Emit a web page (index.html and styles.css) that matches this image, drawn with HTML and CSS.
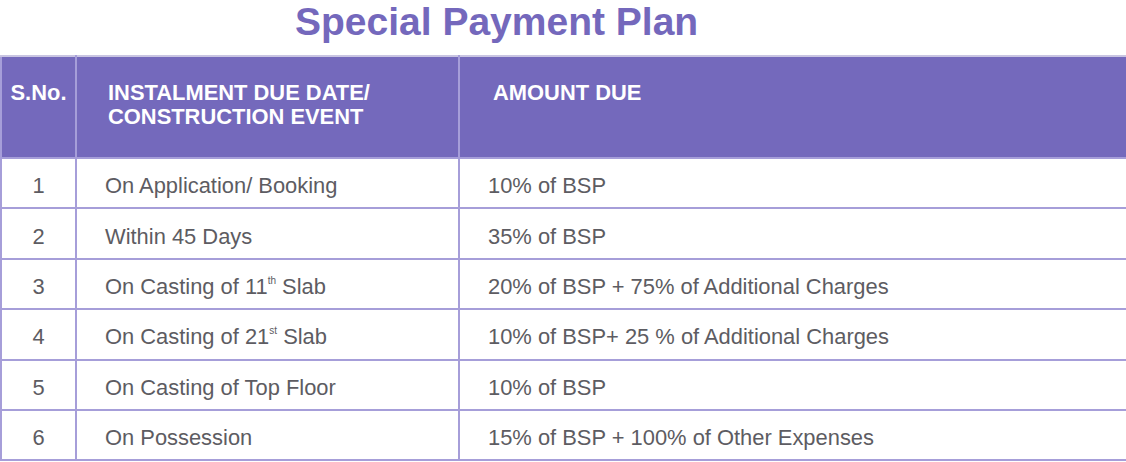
FILE: index.html
```html
<!DOCTYPE html>
<html lang="en">
<head>
<meta charset="utf-8">
<title>Special Payment Plan</title>
<link rel="stylesheet" href="styles.css">
</head>
<body>
<div class="page">
  <h1 class="title">Special Payment Plan</h1>
  <table class="plan">
    <colgroup>
      <col class="c-no">
      <col class="c-event">
      <col class="c-amount">
    </colgroup>
    <thead>
      <tr class="head-row">
        <th class="h-no">S.No.</th>
        <th class="h-event">INSTALMENT DUE DATE/<br>CONSTRUCTION EVENT</th>
        <th class="h-amount">AMOUNT DUE</th>
      </tr>
    </thead>
    <tbody>
      <tr>
        <td class="d-no">1</td>
        <td class="d-event">On Application/ Booking</td>
        <td class="d-amount">10% of BSP</td>
      </tr>
      <tr>
        <td class="d-no">2</td>
        <td class="d-event">Within 45 Days</td>
        <td class="d-amount">35% of BSP</td>
      </tr>
      <tr>
        <td class="d-no">3</td>
        <td class="d-event">On Casting of 11<sup class="ord">th</sup> Slab</td>
        <td class="d-amount">20% of BSP + 75% of Additional Charges</td>
      </tr>
      <tr>
        <td class="d-no">4</td>
        <td class="d-event">On Casting of 21<sup class="ord">st</sup> Slab</td>
        <td class="d-amount">10% of BSP+ 25 % of Additional Charges</td>
      </tr>
      <tr>
        <td class="d-no">5</td>
        <td class="d-event">On Casting of Top Floor</td>
        <td class="d-amount">10% of BSP</td>
      </tr>
      <tr>
        <td class="d-no">6</td>
        <td class="d-event">On Possession</td>
        <td class="d-amount">15% of BSP + 100% of Other Expenses</td>
      </tr>
    </tbody>
  </table>
</div>
</body>
</html>
```

FILE: styles.css
```css
html, body {
  margin: 0;
  padding: 0;
  background: #ffffff;
}

.page {
  width: 1126px;
  font-family: "Liberation Sans", Arial, sans-serif;
}

.title {
  margin: 0;
  height: 55px;
  padding-left: 295px;
  font-size: 39px;
  line-height: 44px;
  font-weight: bold;
  color: #7468bc;
  box-sizing: border-box;
}

.plan {
  width: 1126px;
  border-collapse: collapse;
  table-layout: fixed;
}

.c-no { width: 75px; }
.c-event { width: 383px; }
.c-amount { width: 668px; }

.plan th,
.plan td {
  border: 2px solid #a69ed9;
  padding: 0;
}

.head-row {
  height: 102px;
  background: #7469bc;
}

.plan th {
  color: #ffffff;
  font-size: 21.9px;
  line-height: 24px;
  font-weight: bold;
  text-align: left;
  vertical-align: top;
  padding-top: 24px;
  border-top-color: #c9c5e2;
}

.plan th.h-no {
  text-align: center;
}

.plan th.h-event {
  padding-left: 31px;
}

.plan th.h-amount {
  padding-left: 33px;
}

.plan tbody tr {
  height: 50.4px;
}

.plan td {
  color: #5d5c62;
  font-size: 21.9px;
  line-height: 24px;
  vertical-align: middle;
  padding-top: 6px;
}

.plan td.d-no {
  text-align: center;
}

.plan td.d-event {
  padding-left: 28px;
}

.plan td.d-amount {
  padding-left: 28px;
}

.ord {
  font-size: 10px;
  line-height: 0;
  vertical-align: 10px;
}
```
